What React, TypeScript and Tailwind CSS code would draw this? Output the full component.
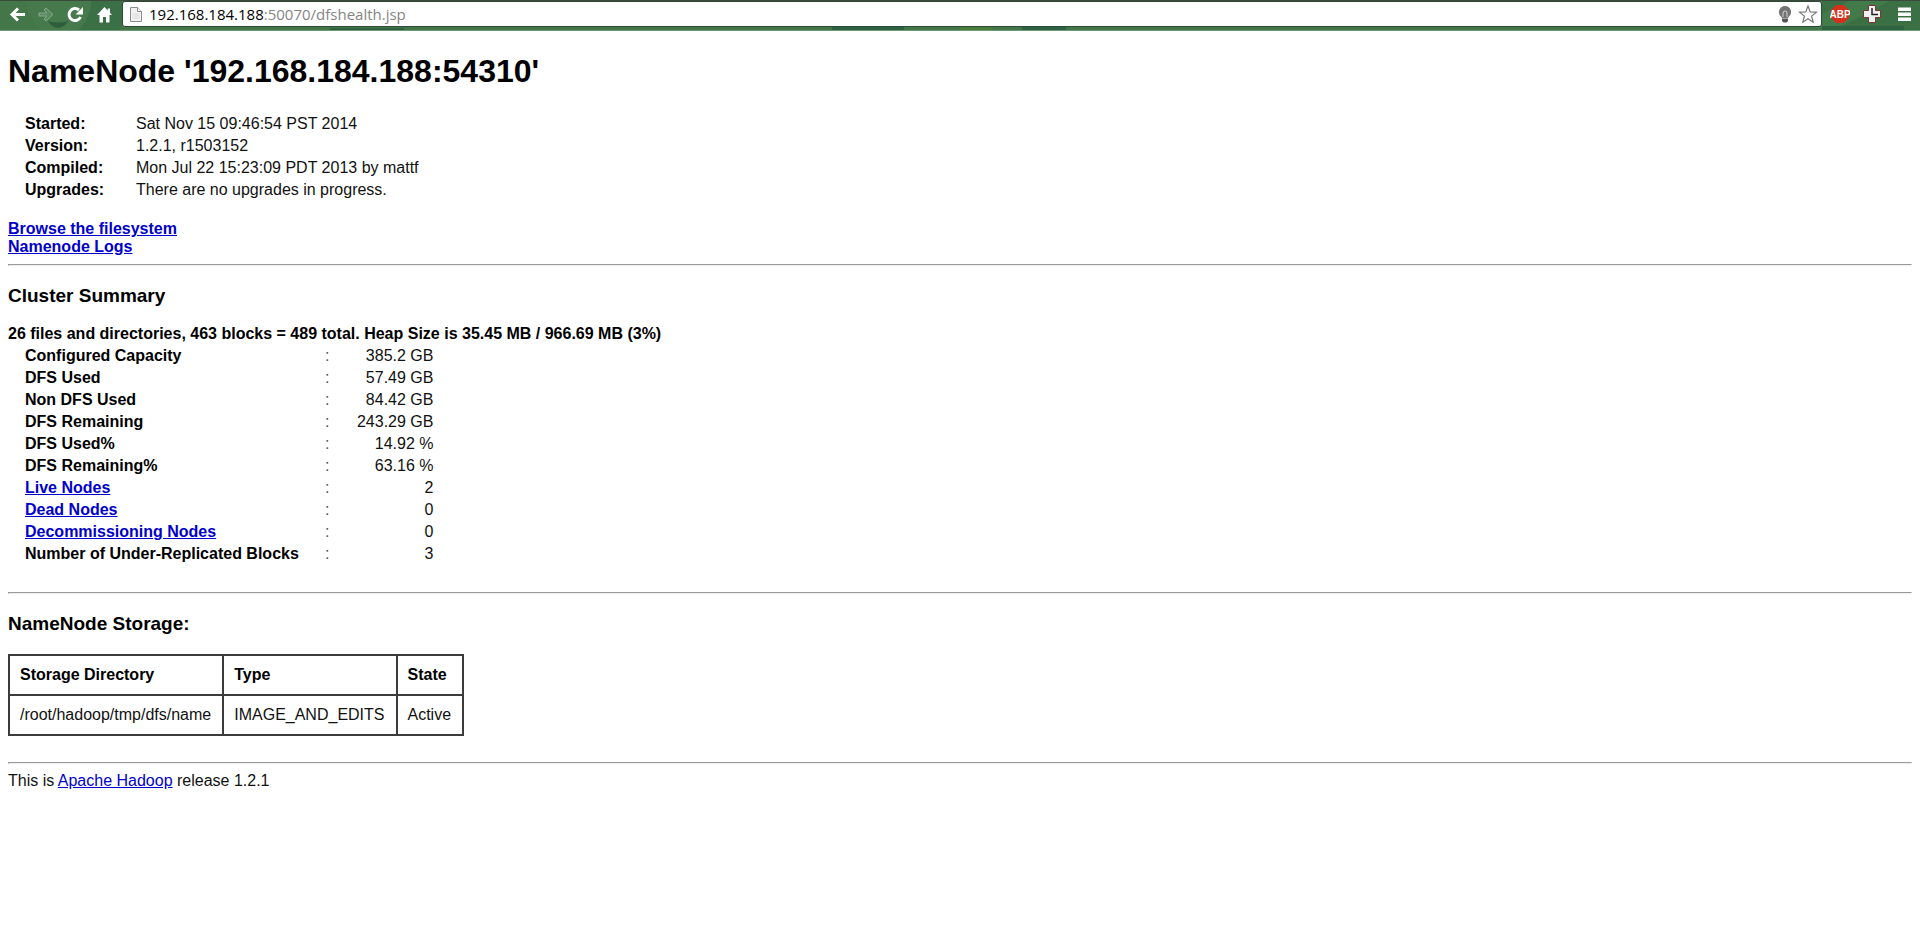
import React from "react";

const info = [
  ["Started:", "Sat Nov 15 09:46:54 PST 2014"],
  ["Version:", "1.2.1, r1503152"],
  ["Compiled:", "Mon Jul 22 15:23:09 PDT 2013 by mattf"],
  ["Upgrades:", "There are no upgrades in progress."],
];

const summary: { label: string; value: string; link?: boolean }[] = [
  { label: "Configured Capacity", value: "385.2 GB" },
  { label: "DFS Used", value: "57.49 GB" },
  { label: "Non DFS Used", value: "84.42 GB" },
  { label: "DFS Remaining", value: "243.29 GB" },
  { label: "DFS Used%", value: "14.92 %" },
  { label: "DFS Remaining%", value: "63.16 %" },
  { label: "Live Nodes", value: "2", link: true },
  { label: "Dead Nodes", value: "0", link: true },
  { label: "Decommissioning Nodes", value: "0", link: true },
  { label: "Number of Under-Replicated Blocks", value: "3" },
];

const linkClass = "text-[#0000cc] underline";
const cellClass = "border-2 border-[#3c3c3c] py-[10px] pr-[11px] pl-[10px]";

function Rule() {
  return <hr className="h-[2px] border border-[#9a9a9a] border-r-[#eeeeee] border-b-[#eeeeee]" />;
}

function ThemeArt() {
  return (
    <svg className="absolute inset-0 h-full w-full" viewBox="0 0 1920 31" preserveAspectRatio="none" aria-hidden="true">
      <rect width="1920" height="31" fill="#437649" />
      <path d="M26 0h66q-2 22-16 31H42Q28 18 26 0z" fill="#467a4d" />
      <path d="M48 21q9 3 20 0-3 6-10 7-7-1-10-7z" fill="#2f5e3d" />
      <path d="M92 0h36l-8 31H78q12-12 14-31z" fill="#3b6f45" />
      <path d="M330 28h74v3h-74zM832 26h72v5h-72zM1022 26h44v5h-44z" fill="#2f6244" />
      <path d="M960 26h32v5h-32z" fill="#4b7d3b" />
      <path d="M1822 0h98v31h-98z" fill="#3a7044" />
      <path d="M1822 14l30-14h40l-50 26h-20z" fill="#437a4a" />
      <path d="M1822 26h82v5h-82z" fill="#2f6340" />
      <rect width="1920" height="1" fill="#3c4a3e" />
      <rect y="30" width="1920" height="1" fill="#6f9a78" />
    </svg>
  );
}

function Toolbar() {
  return (
    <header className="relative">
      <ThemeArt />
      <div className="relative flex h-[31px] items-center pb-1">
        <nav className="flex items-center gap-[9px] pl-[7px]" aria-label="Browser">
          <button aria-label="Back" className="size-5">
            <svg viewBox="0 0 20 20" className="size-5" fill="none" stroke="#fff" strokeWidth="3">
              <path d="M18 10.500H5M11 4.500l-6 6 6 6" />
            </svg>
          </button>
          <button aria-label="Forward" className="size-5">
            <svg viewBox="0 0 20 20" className="size-5" fill="#5a8a60" stroke="#86a98a" strokeWidth="1">
              <path d="M3 9h8L8 6l2-2L17 10.500l-7 6.500-2-2 3-3H3z" />
            </svg>
          </button>
          <button aria-label="Reload" className="size-5">
            <svg viewBox="0 0 20 20" className="size-5">
              <path d="M15.500 13a6 6 0 1 1-1.500-7" fill="none" stroke="#fff" strokeWidth="3" />
              <path d="M18 3v7.500h-7.500z" fill="#fff" />
            </svg>
          </button>
          <button aria-label="Home" className="size-5">
            <svg viewBox="0 0 20 20" className="size-5" fill="#fff">
              <path d="M10.500 3L3 11h2.500v7.500H9V13h3v5.500h3.500V11H18L16 8.800V4.500h-2.300v1.900z" />
            </svg>
          </button>
        </nav>
        <div className="ml-[8px] flex h-[26px] min-w-0 flex-1 items-center rounded-[3px] border border-[#2c4a35] bg-white pr-[3px] pl-[6px]">
          <svg viewBox="0 0 14 18" className="h-[18px] w-[14px] shrink-0" fill="#f1f1f1" stroke="#8c8c8c">
            <path d="M1.500 2.500h7l4 4v10h-11z" />
            <path d="M8.500 2.500v4h4" fill="#fff" />
            <path d="M3.500 9h7M3.500 11h7M3.500 13h7" stroke="#dadada" />
          </svg>
          <div className="min-w-0 flex-1 pl-[6px] font-['Open_Sans','Noto_Sans',sans-serif] text-[15px] leading-5 whitespace-nowrap text-black">
            192.168.184.188<span className="text-[#858585]">:50070/dfshealth.jsp</span>
          </div>
          <button aria-label="Hint" className="mr-[4px] size-[18px]">
            <svg viewBox="0 0 18 18" className="size-[18px]">
              <path d="M9 1a6 6 0 0 0-4 10.500L6 13h6l1-1.500A6 6 0 0 0 9 1z" fill="#747474" />
              <path d="M7 12V8a2 2 0 0 1 4 0v4" fill="none" stroke="#d5d5d5" />
              <path d="M6 13.500h6V16l-1.500 1.500h-3L6 16z" fill="#555" />
            </svg>
          </button>
          <button aria-label="Bookmark" className="size-5">
            <svg viewBox="0 0 20 20" className="size-5" fill="#fff" stroke="#777" strokeWidth="1.200">
              <path d="M10 2l2.200 5.900 6.200.3-4.800 3.900 1.600 6.100L10 14.800l-5.200 3.400 1.600-6.100-4.800-3.900 6.200-.3z" />
            </svg>
          </button>
        </div>
        <div className="flex items-center gap-[12px] pr-[6px] pl-[8px]">
          <button aria-label="Adblock Plus" className="size-5">
            <svg viewBox="0 0 20 20" className="size-5">
              <path d="M6.300 1h7.400L19 6.300v7.400L13.700 19H6.300L1 13.700V6.300z" fill="#d5301c" />
              <text x="10" y="13.500" textAnchor="middle" fontSize="10" fontWeight="700" fontFamily="Liberation Sans Narrow, Liberation Sans, sans-serif" fill="#fff">ABP</text>
            </svg>
          </button>
          <button aria-label="Session clock" className="size-5">
            <svg viewBox="0 0 20 20" className="size-5">
              <path d="M6.500 1.500h7v5h5v7h-5v5h-7v-5h-5v-7h5z" fill="#f0f0f4" stroke="#7b3434" />
              <path d="M10 4v6.500h6" fill="none" stroke="#222" strokeWidth="1.500" />
            </svg>
          </button>
          <button aria-label="Menu" className="size-5">
            <svg viewBox="0 0 20 20" className="size-5" fill="#fff">
              <path d="M4 3.500h13v3.500H4zM4 8.500h13V12H4zM4 13.500h13V17H4z" />
            </svg>
          </button>
        </div>
      </div>
    </header>
  );
}

export default function App() {
  return (
    <div className="min-h-screen bg-white font-['Liberation_Sans',Arial,sans-serif] text-[16px] leading-[18px] text-[#111]">
      <Toolbar />
      <main className="px-2 pt-[22px]">
        <h1 className="text-[32px] leading-[37px] font-bold text-black">NameNode '192.168.184.188:54310'</h1>

        <table className="mt-[23px]">
          <tbody>
            {info.map(([label, value]) => (
              <tr key={label}>
                <th scope="row" className="w-[128px] py-[2px] pl-[17px] text-left font-bold text-black">{label}</th>
                <td className="py-[2px]">{value}</td>
              </tr>
            ))}
          </tbody>
        </table>

        <div className="mt-[19px] mb-[8px] flex flex-col items-start font-bold">
          <a href="#browse" className={linkClass}>Browse the filesystem</a>
          <a href="#logs" className={linkClass}>Namenode Logs</a>
        </div>
        <Rule />

        <h3 className="mt-[19px] text-[19px] leading-[22px] font-bold text-black">Cluster Summary</h3>
        <p className="mt-[18px] font-bold text-black">
          26 files and directories, 463 blocks = 489 total. Heap Size is 35.45 MB / 966.69 MB (3%)
        </p>
        <table className="mt-[2px]">
          <tbody>
            {summary.map((row) => (
              <tr key={row.label}>
                <th scope="row" className="w-[317px] py-[2px] pl-[17px] text-left font-bold text-black">
                  {row.link ? <a href="#nodes" className={linkClass}>{row.label}</a> : row.label}
                </th>
                <td className="py-[2px] text-[#555]">:</td>
                <td className="w-[104px] py-[2px] text-right">{row.value}</td>
              </tr>
            ))}
          </tbody>
        </table>

        <div className="mt-[27px]">
          <Rule />
        </div>
        <h3 className="mt-[19px] text-[19px] leading-[22px] font-bold text-black">NameNode Storage:</h3>
        <table className="mt-[19px] border-collapse">
          <thead>
            <tr className="text-left text-black">
              <th className={cellClass}>Storage Directory</th>
              <th className={cellClass}>Type</th>
              <th className={cellClass}>State</th>
            </tr>
          </thead>
          <tbody>
            <tr>
              <td className={cellClass}>/root/hadoop/tmp/dfs/name</td>
              <td className={cellClass}>IMAGE_AND_EDITS</td>
              <td className={cellClass}>Active</td>
            </tr>
          </tbody>
        </table>

        <div className="mt-[26px] mb-[8px]">
          <Rule />
        </div>
        <footer>
          This is <a href="#hadoop" className={linkClass}>Apache Hadoop</a> release 1.2.1
        </footer>
      </main>
    </div>
  );
}
